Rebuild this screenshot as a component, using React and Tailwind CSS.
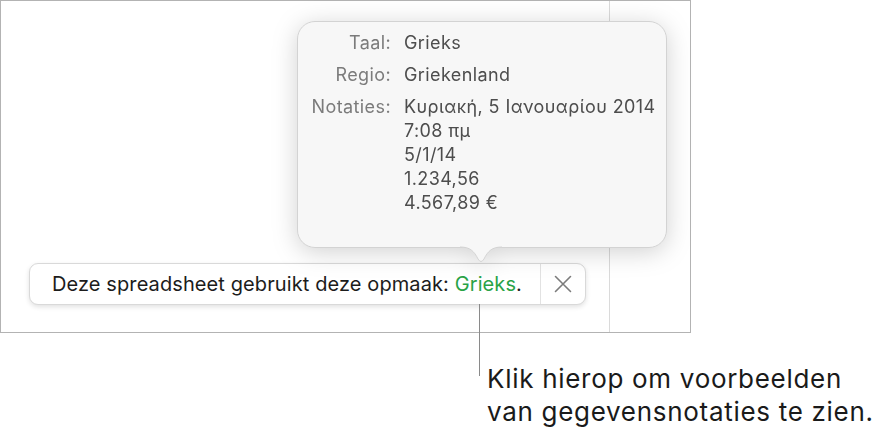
import React from 'react';

const rows = [
  { label: 'Taal:', lines: ['Grieks'] },
  { label: 'Regio:', lines: ['Griekenland'] },
  {
    label: 'Notaties:',
    lines: ['Κυριακή, 5 Ιανουαρίου 2014', '7:08 πμ', '5/1/14', '1.234,56', '4.567,89 €'],
  },
];

const CloseIcon = () => (
  <svg width="18" height="18" viewBox="0 0 18 18" fill="none">
    <path d="M1.5 1.5 L16.5 16.5 M16.5 1.5 L1.5 16.5" stroke="#7c7c7c" strokeWidth="1.6" strokeLinecap="round" />
  </svg>
);

// popover with its little arrow at the bottom
const Popover = () => (
  <div className="absolute left-[297px] top-[21px] z-10 drop-shadow-[0_4px_12px_rgba(0,0,0,0.18)]">
    <div className="relative w-[370px] h-[227px] rounded-[18px] bg-[#f7f7f7] border border-[#d3d3d3] pl-[13px] pt-[9px]">
      <div className="flex flex-col gap-2">
        {rows.map((row) => (
          <div key={row.label} className="flex gap-[13px] text-[18px] leading-6 tracking-[0.4px]">
            <div className="w-[80px] text-right text-[#7b7b7b] shrink-0">{row.label}</div>
            <div className="flex flex-col text-[#4d4d4d]">
              {row.lines.map((l) => (
                <span key={l} className="whitespace-nowrap">{l}</span>
              ))}
            </div>
          </div>
        ))}
      </div>
      <svg
        className="absolute left-[162px] top-[224px]"
        width="42"
        height="19"
        viewBox="0 0 42 19"
        fill="none"
      >
        <path d="M0 0 H42 V1 C32 1 28 5 24 13 Q21 18 18 13 C14 5 10 1 0 1 Z" fill="#f7f7f7" />
        <path d="M0 1 C10 1 14 5 18 13 Q21 18 24 13 C28 5 32 1 42 1" stroke="#d3d3d3" strokeWidth="1" />
      </svg>
    </div>
  </div>
);

export default function App() {
  return (
    <div
      className="relative w-[894px] h-[438px] bg-white overflow-hidden"
      style={{ fontFamily: 'Inter, "Noto Sans", sans-serif' }}
    >
      <Popover />

      {/* sheet frame */}
      <div className="flex w-[691px] h-[333px] border border-[#b3b3b3]">
        <div className="w-[609px] h-full border-r border-[#dadada] flex flex-col justify-end pl-[28px] pb-[27px]">
          <div className="flex items-center w-[557px] h-[42px] bg-white rounded-[9px] border border-[#d9d9d9] shadow-[0_2px_5px_rgba(0,0,0,0.12)]">
            <div className="flex-1 pl-[22px] text-[20px] tracking-[0.1px] text-[#1c1c1c] whitespace-nowrap">
              Deze spreadsheet gebruikt deze opmaak: <span className="text-[#29a347]">Grieks</span>.
            </div>
            <div className="w-[45px] h-full border-l border-[#e2e2e2] flex items-center justify-center">
              <CloseIcon />
            </div>
          </div>
        </div>
        <div className="flex-1" />
      </div>

      {/* callout */}
      <div className="absolute left-[479px] top-[304px] w-px h-[72px] bg-[#8a8a8a]" />
      <div className="pl-[487px] pt-[29px] text-[26px] leading-[33px] tracking-[0.7px] text-[#1a1a1a]">
        <div className="whitespace-nowrap">Klik hierop om voorbeelden</div>
        <div className="whitespace-nowrap">van gegevensnotaties te zien.</div>
      </div>
    </div>
  );
}
